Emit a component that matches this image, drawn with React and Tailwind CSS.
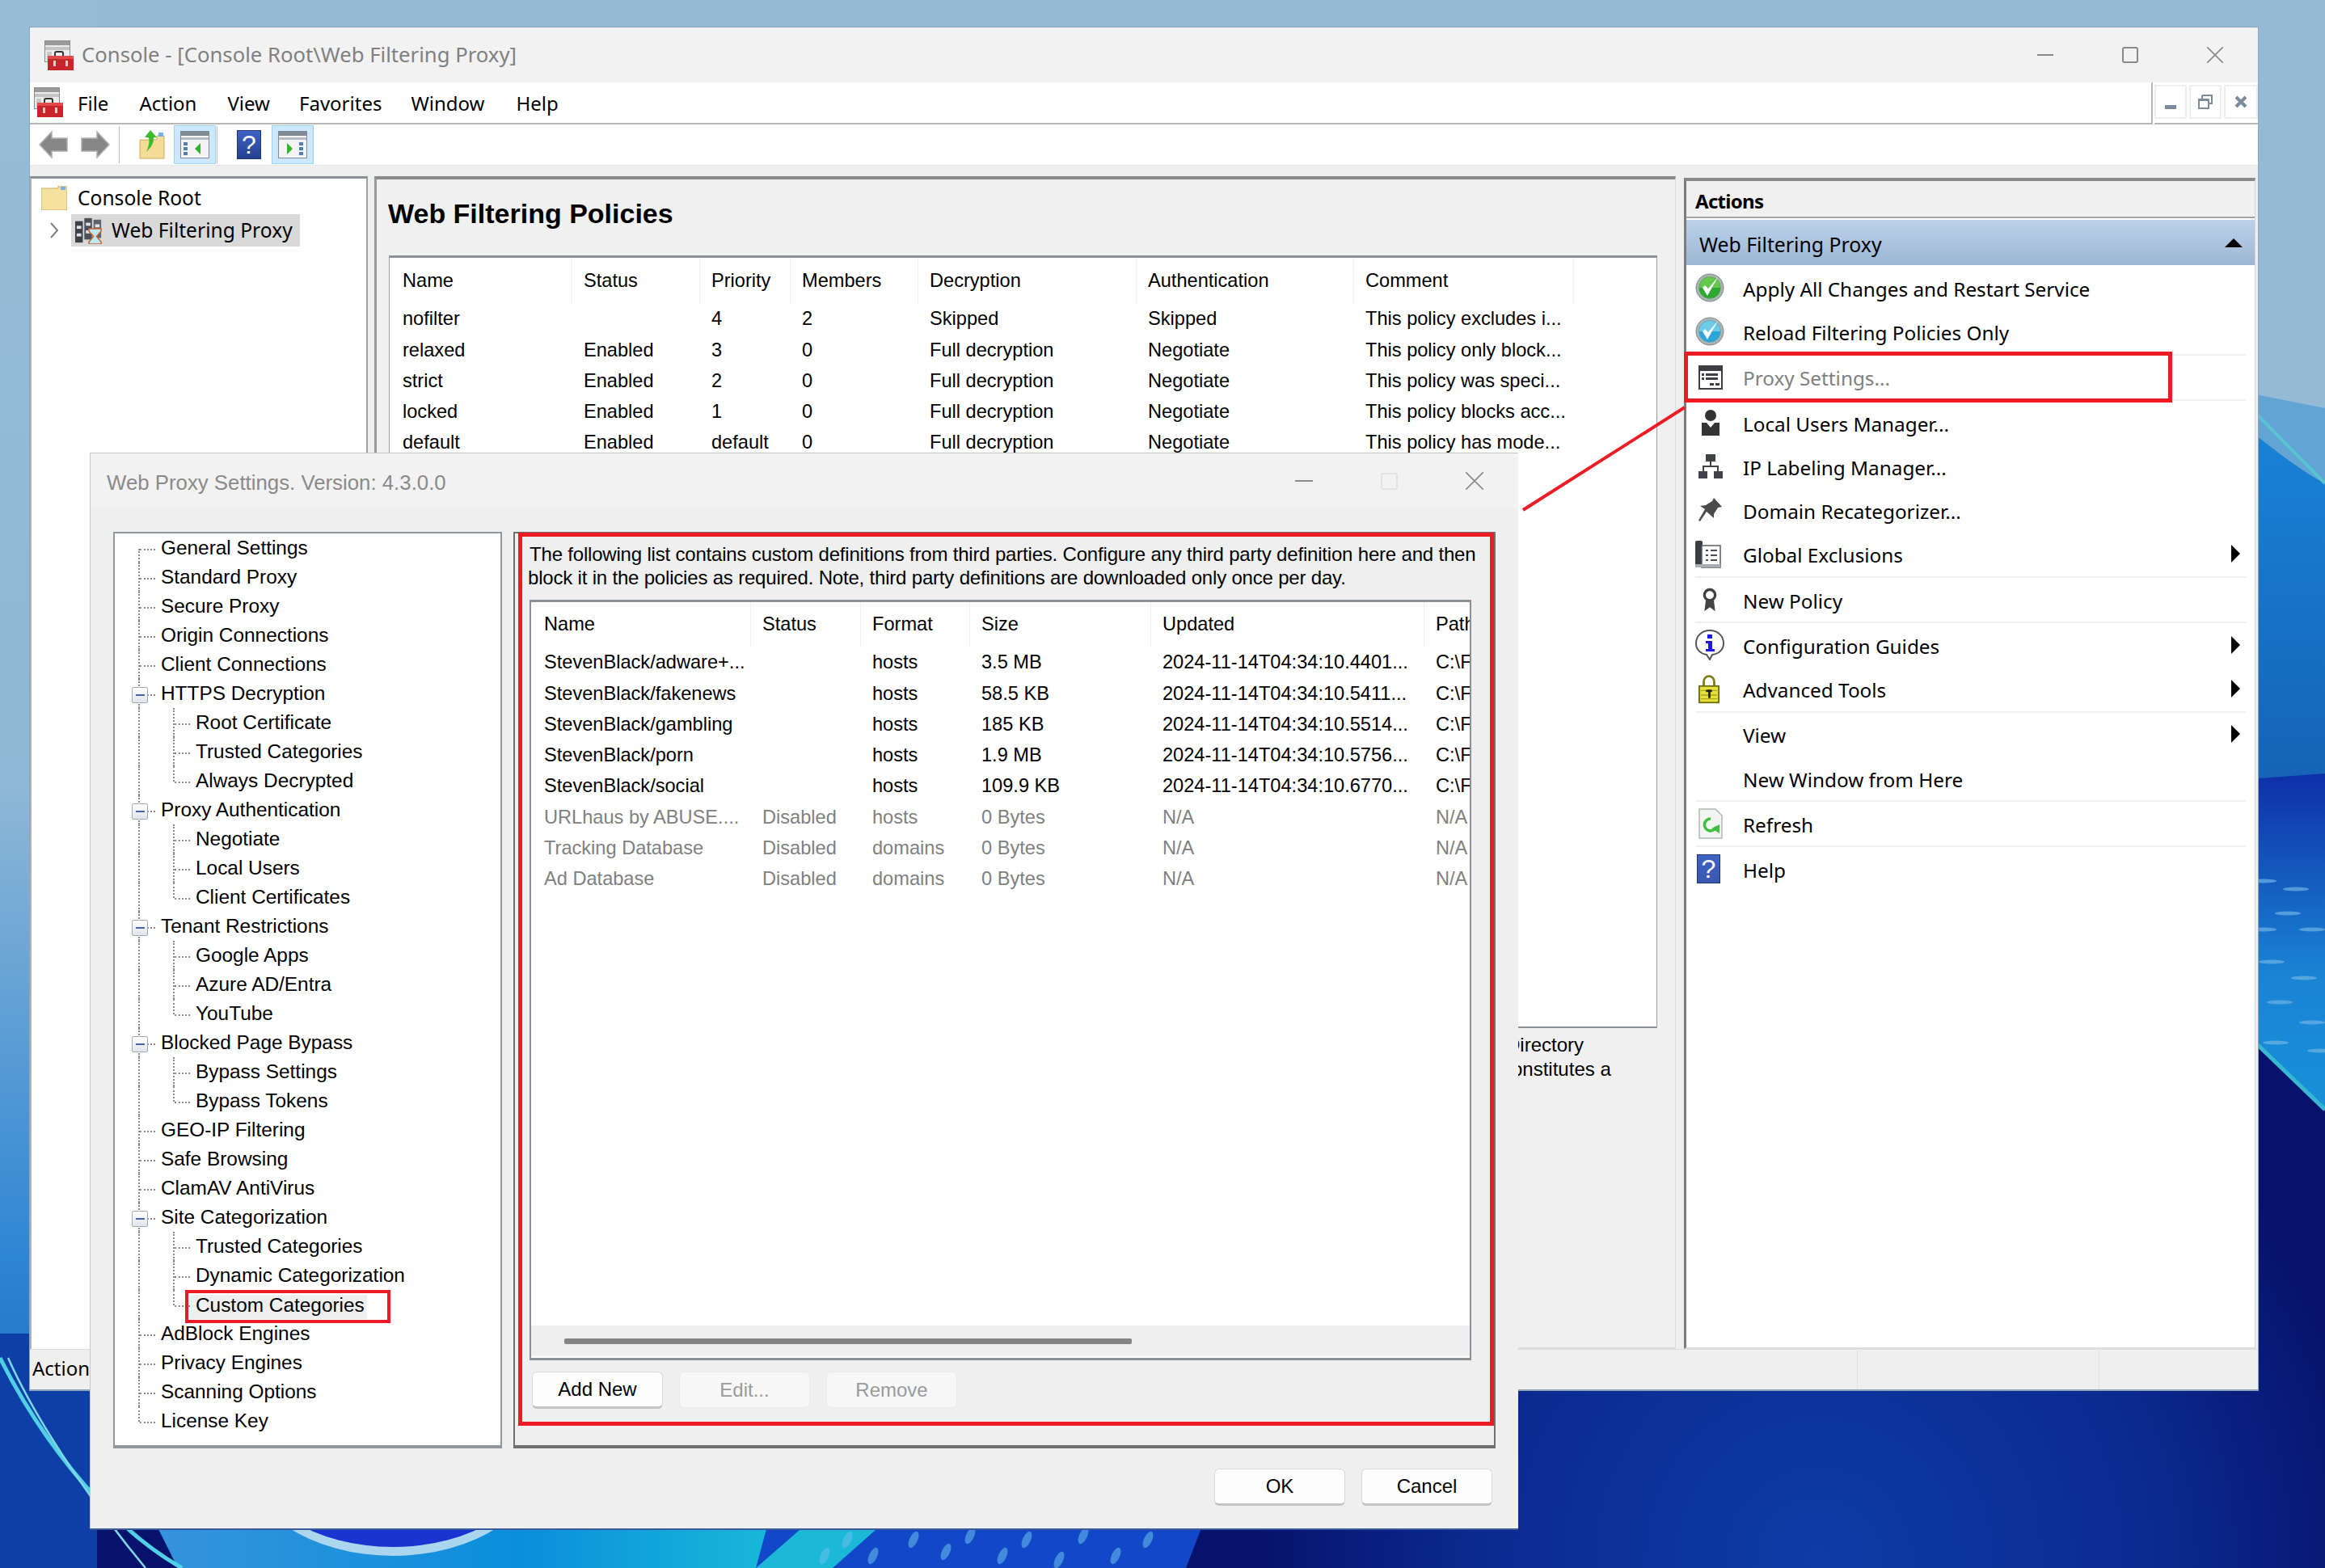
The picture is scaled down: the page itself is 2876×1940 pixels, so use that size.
import React from 'react';

const UI = "font-['Noto_Sans',sans-serif]";
const ARIAL = "font-['Liberation_Sans',Arial,sans-serif]";

const policyCols = [226, 158, 112, 158, 270, 269, 272];
const policyHead = ['Name', 'Status', 'Priority', 'Members', 'Decryption', 'Authentication', 'Comment'];
const policies = [
  ['nofilter', '', '4', '2', 'Skipped', 'Skipped', 'This policy excludes i...'],
  ['relaxed', 'Enabled', '3', '0', 'Full decryption', 'Negotiate', 'This policy only block...'],
  ['strict', 'Enabled', '2', '0', 'Full decryption', 'Negotiate', 'This policy was speci...'],
  ['locked', 'Enabled', '1', '0', 'Full decryption', 'Negotiate', 'This policy blocks acc...'],
  ['default', 'Enabled', 'default', '0', 'Full decryption', 'Negotiate', 'This policy has mode...'],
];

const listCols = [272, 136, 135, 224, 338, 58];
const listHead = ['Name', 'Status', 'Format', 'Size', 'Updated', 'Path'];
const lists = [
  ['StevenBlack/adware+...', '', 'hosts', '3.5 MB', '2024-11-14T04:34:10.4401...', 'C:\\Fi'],
  ['StevenBlack/fakenews', '', 'hosts', '58.5 KB', '2024-11-14T04:34:10.5411...', 'C:\\Fi'],
  ['StevenBlack/gambling', '', 'hosts', '185 KB', '2024-11-14T04:34:10.5514...', 'C:\\Fi'],
  ['StevenBlack/porn', '', 'hosts', '1.9 MB', '2024-11-14T04:34:10.5756...', 'C:\\Fi'],
  ['StevenBlack/social', '', 'hosts', '109.9 KB', '2024-11-14T04:34:10.6770...', 'C:\\Fi'],
  ['URLhaus by ABUSE....', 'Disabled', 'hosts', '0 Bytes', 'N/A', 'N/A'],
  ['Tracking Database', 'Disabled', 'domains', '0 Bytes', 'N/A', 'N/A'],
  ['Ad Database', 'Disabled', 'domains', '0 Bytes', 'N/A', 'N/A'],
];

const tree = [
  ['General Settings', 0, 'first'],
  ['Standard Proxy', 0],
  ['Secure Proxy', 0],
  ['Origin Connections', 0],
  ['Client Connections', 0],
  ['HTTPS Decryption', 0, 'open'],
  ['Root Certificate', 1],
  ['Trusted Categories', 1],
  ['Always Decrypted', 1, 'end'],
  ['Proxy Authentication', 0, 'open'],
  ['Negotiate', 1],
  ['Local Users', 1],
  ['Client Certificates', 1, 'end'],
  ['Tenant Restrictions', 0, 'open'],
  ['Google Apps', 1],
  ['Azure AD/Entra', 1],
  ['YouTube', 1, 'end'],
  ['Blocked Page Bypass', 0, 'open'],
  ['Bypass Settings', 1],
  ['Bypass Tokens', 1, 'end'],
  ['GEO-IP Filtering', 0],
  ['Safe Browsing', 0],
  ['ClamAV AntiVirus', 0],
  ['Site Categorization', 0, 'open'],
  ['Trusted Categories', 1],
  ['Dynamic Categorization', 1],
  ['Custom Categories', 1, 'end'],
  ['AdBlock Engines', 0],
  ['Privacy Engines', 0],
  ['Scanning Options', 0],
  ['License Key', 0, 'last'],
];

function ConsoleIcon() {
  return (
    <svg viewBox="0 0 36 37" className="w-[36px] h-[37px] shrink-0">
      <rect x="0.5" y="0.5" width="31" height="26" fill="#ececec" stroke="#8a8a8a" />
      <rect x="1" y="1" width="30" height="5" fill="#9a9a9a" />
      <rect x="1" y="8" width="30" height="4" fill="#c4c4c4" />
      <rect x="3" y="14" width="6" height="11" fill="#c9c9c9" />
      <path d="M13 20 v-4 a2 2 0 0 1 2-2 h6 a2 2 0 0 1 2 2 v4" fill="none" stroke="#333" strokeWidth="2" />
      <rect x="4" y="19" width="32" height="18" fill="#c9242c" />
      <rect x="4" y="19" width="32" height="4" fill="#e04a4a" />
      <rect x="11" y="25" width="3" height="7" fill="#f3c9c9" />
      <rect x="26" y="25" width="3" height="7" fill="#f3c9c9" />
    </svg>
  );
}

function NavArrow({ flip }) {
  return (
    <svg viewBox="0 0 36 34" className={flip ? 'w-[36px] h-[34px] shrink-0 -scale-x-100' : 'w-[36px] h-[34px] shrink-0'}>
      <path d="M1 17 L16 1 V9 H35 V25 H16 V33 Z" fill="#868686" stroke="#b0b0b0" strokeWidth="1.5" />
    </svg>
  );
}

function FolderUp() {
  return (
    <svg viewBox="0 0 32 36" className="w-[32px] h-[36px] shrink-0">
      <path d="M1 12 H22 V7 H31 V35 H1 Z" fill="#f4dc96" stroke="#c9ac5e" />
      <path d="M24 3 H30 V8 H24 Z" fill="#6fb3e8" />
      <path d="M14 0 L22 9 H18 C18 18 14 22 9 27 C12 20 13 15 12 9 H7 Z" fill="#3cbc2c" />
    </svg>
  );
}

function PanelIcon({ right }) {
  return (
    <svg viewBox="0 0 36 34" className="w-[36px] h-[34px]">
      <rect x="0.5" y="0.5" width="35" height="33" fill="#f4f4f4" stroke="#7f8a94" />
      <rect x="1" y="1" width="34" height="5" fill="#7f8a94" />
      <rect x="1" y="8" width="34" height="3" fill="#b4bcc4" />
      <rect x={right ? 26 : 4} y="14" width="5" height="4" fill="#4c7fb8" />
      <rect x={right ? 26 : 4} y="20" width="5" height="4" fill="#4c7fb8" />
      <rect x={right ? 26 : 4} y="26" width="5" height="4" fill="#4c7fb8" />
      <path d={right ? 'M11 15 L18 22 L11 29 Z' : 'M25 15 L18 22 L25 29 Z'} fill="#2fb52a" />
    </svg>
  );
}

function HelpIcon({ size }) {
  return (
    <div className={size === 'sm' ? "w-[30px] h-[36px] shrink-0 bg-gradient-to-b from-[#3f62c4] to-[#24408f] border border-[#1c3478] flex items-center justify-center text-white text-[32px] leading-none font-['Liberation_Sans',sans-serif]" : "w-[29px] h-[36px] shrink-0 bg-gradient-to-b from-[#3f62c4] to-[#3a58b0] border border-[#1c3478] flex items-center justify-center text-white text-[32px] leading-none font-['Liberation_Sans',sans-serif]"}>
      ?
    </div>
  );
}

function ProxyTreeIcon() {
  return (
    <svg viewBox="0 0 36 36" className="w-[34px] h-[34px] shrink-0">
      <rect x="0" y="6" width="10" height="28" fill="#3b3f46" />
      <rect x="12" y="2" width="10" height="28" fill="#4a4f58" />
      <rect x="24" y="4" width="10" height="24" fill="#5e646e" />
      <rect x="2" y="12" width="6" height="4" fill="#dfe3e8" />
      <rect x="2" y="22" width="6" height="4" fill="#dfe3e8" />
      <rect x="14" y="8" width="6" height="4" fill="#dfe3e8" />
      <rect x="14" y="18" width="6" height="4" fill="#dfe3e8" />
      <rect x="26" y="10" width="6" height="4" fill="#dfe3e8" />
      <path d="M18 16 H34 V19 L28 26 L34 33 V36 H18 V33 L24 26 L18 19 Z" fill="#bfe6f7" stroke="#c7662a" strokeWidth="1.6" />
    </svg>
  );
}

function CheckBadge({ from, to }) {
  return (
    <svg viewBox="0 0 36 36" className="w-[36px] h-[36px]">
      <circle cx="18" cy="18" r="17" fill="#a9b3b2" stroke="#7f8a8a" />
      <circle cx="18" cy="18" r="13.5" fill={from} />
      <path d="M5 18 A13 13 0 0 1 31 18 Z" fill={to} opacity="0.7" />
      <path d="M9 18 L15 28 L28 5 L16 19 L12 15 Z" fill="#fff" />
    </svg>
  );
}

function ActionIcon({ name }) {
  if (name === 'apply') return <CheckBadge from="#2fa82f" to="#7bd65a" />;
  if (name === 'reload') return <CheckBadge from="#2ea5d8" to="#8adcf0" />;
  if (name === 'settings') {
    return (
      <svg viewBox="0 0 30 30" className="w-[30px] h-[30px] ml-[4px]">
        <rect x="0" y="0" width="30" height="30" fill="#3d3f44" />
        <rect x="2" y="7" width="26" height="21" fill="#fff" />
        <rect x="4" y="10" width="3" height="3" fill="#3d3f44" />
        <rect x="9" y="10" width="15" height="3" fill="#3d3f44" />
        <rect x="4" y="15" width="3" height="3" fill="#3d3f44" />
        <rect x="9" y="15" width="15" height="3" fill="#3d3f44" />
        <rect x="14" y="22" width="5" height="3" fill="#3d3f44" />
        <rect x="21" y="22" width="5" height="3" fill="#3d3f44" />
      </svg>
    );
  }
  if (name === 'users') {
    return (
      <svg viewBox="0 0 26 32" className="w-[26px] h-[32px] ml-[6px]">
        <circle cx="13" cy="7" r="7" fill="#333" />
        <path d="M2 16 H8 L13 22 L18 16 H24 V32 H2 Z" fill="#333" />
      </svg>
    );
  }
  if (name === 'network') {
    return (
      <svg viewBox="0 0 30 30" className="w-[30px] h-[30px] ml-[4px]">
        <rect x="9" y="0" width="12" height="9" fill="#3f4246" />
        <rect x="14" y="9" width="2" height="7" fill="#3f4246" />
        <rect x="5" y="14" width="20" height="2" fill="#3f4246" />
        <rect x="5" y="14" width="2" height="7" fill="#3f4246" />
        <rect x="23" y="14" width="2" height="7" fill="#3f4246" />
        <rect x="0" y="21" width="11" height="9" fill="#3f4246" />
        <rect x="19" y="21" width="11" height="9" fill="#3f4246" />
      </svg>
    );
  }
  if (name === 'pin') {
    return (
      <svg viewBox="0 0 30 30" className="w-[30px] h-[30px] ml-[3px]">
        <path d="M20 0 L30 11 L25 12 L20 20 L20 25 L11 17 L3 29 L1 28 L9 14 L3 10 L10 9 L18 4 Z" fill="#4a4a4a" />
      </svg>
    );
  }
  if (name === 'exclusions') {
    return (
      <svg viewBox="0 0 32 34" className="w-[32px] h-[34px]">
        <rect x="0" y="0" width="9" height="31" rx="2" fill="#3a3d42" />
        <rect x="8" y="6" width="23" height="27" fill="#fff" stroke="#5a5e64" strokeWidth="1.5" />
        <path d="M13 12 H16 M19 12 H27 M13 18 H16 M19 18 H27 M13 24 H16 M19 24 H27" stroke="#4a4d52" strokeWidth="2" />
        <rect x="0" y="29" width="31" height="4" fill="#a8adb4" />
      </svg>
    );
  }
  if (name === 'policy') {
    return (
      <svg viewBox="0 0 24 34" className="w-[20px] h-[32px] ml-[8px]">
        <circle cx="12" cy="10" r="8" fill="#fff" stroke="#3f3f3f" strokeWidth="4" />
        <path d="M6 18 L4 34 L12 28 L20 34 L18 18 Z" fill="#444" />
      </svg>
    );
  }
  if (name === 'guides') {
    return (
      <svg viewBox="0 0 36 38" className="w-[36px] h-[38px]">
        <path d="M18 1 C8 1 1 8 1 17 C1 25 7 30 14 31 L18 37 L21 31 C29 30 35 25 35 17 C35 8 28 1 18 1 Z" fill="#fff" stroke="#555" strokeWidth="2" />
        <rect x="15" y="6" width="6" height="5" fill="#1a1ae0" />
        <path d="M13 14 H21 V24 H24 V27 H13 V24 H16 V17 H13 Z" fill="#1a1ae0" />
      </svg>
    );
  }
  if (name === 'lock') {
    return (
      <svg viewBox="0 0 28 38" className="w-[26px] h-[37px] ml-[4px]">
        <path d="M7 16 V9 a7 7 0 0 1 14 0 V16" fill="none" stroke="#7d7d10" strokeWidth="3" />
        <rect x="1" y="15" width="26" height="22" fill="#e6e23a" stroke="#6d6d10" strokeWidth="2" />
        <path d="M3 21 H25 M3 27 H25 M3 32 H25" stroke="#a8a420" strokeWidth="1.5" />
        <rect x="10" y="20" width="8" height="3" fill="#222" />
        <rect x="13" y="20" width="3" height="11" fill="#222" />
      </svg>
    );
  }
  if (name === 'refresh') {
    return (
      <svg viewBox="0 0 30 38" className="w-[30px] h-[38px] ml-[4px]">
        <path d="M1 1 H21 L29 9 V37 H1 Z" fill="#f3f5f3" stroke="#b2b6b2" strokeWidth="1.5" />
        <path d="M15 13 a7.5 7.5 0 1 0 7 10" fill="none" stroke="#3fc03f" strokeWidth="3.5" />
        <path d="M16 25 L26 20 L26 31 Z" fill="#3fc03f" />
      </svg>
    );
  }
  if (name === 'help') return <div className="ml-[2px]"><HelpIcon /></div>;
  return null;
}

const actionGroups = [
  [['Apply All Changes and Restart Service', 'apply'], ['Reload Filtering Policies Only', 'reload']],
  [['Proxy Settings...', 'settings', false, true]],
  [
    ['Local Users Manager...', 'users'],
    ['IP Labeling Manager...', 'network'],
    ['Domain Recategorizer...', 'pin'],
    ['Global Exclusions', 'exclusions', true],
  ],
  [['New Policy', 'policy']],
  [['Configuration Guides', 'guides', true], ['Advanced Tools', 'lock', true]],
  [['View', null, true], ['New Window from Here', null]],
  [['Refresh', 'refresh']],
  [['Help', 'help']],
];

function ActionsPanel() {
  return (
    <div className={`${UI} relative ml-[10px] w-[707px] shrink-0 bg-white border-t-[4px] border-l-[3px] border-t-[#8a8a8a] border-l-[#7c7c7c] border-r border-r-[#d5d5d5] border-b-2 border-b-[#dcdcdc] mt-[2px]`}>
      <div className="h-[46px] bg-[#f0f0f0] border-b-[2px] border-[#a4a4a4] flex items-center pl-[11px] pt-[6px] text-[24px] font-bold text-black tracking-[-0.7px]">
        Actions
      </div>
      <div className="mt-[2px] h-[56px] bg-gradient-to-b from-[#bcd2ea] to-[#9cb6d3] flex items-center pl-[16px] pr-[15px] pt-[5px] justify-between text-[24.8px] text-black">
        <span>Web Filtering Proxy</span>
        <span className="w-0 h-0 border-l-[11px] border-r-[11px] border-b-[11px] border-l-transparent border-r-transparent border-b-black -mt-[4px]" />
      </div>
      <div className="pt-[3px]">
        {actionGroups.map((group, gi) => (
          <div key={gi}>
            {group.map(([label, icon, sub, dim]) => (
              <div key={label} className="h-[54.25px] flex items-center pl-[11px] pr-[18px]">
                <div className="w-[38px] h-[38px] -mt-[4px] shrink-0 flex items-center">
                  {icon && <ActionIcon name={icon} />}
                </div>
                <span className={dim ? 'ml-[21px] text-[24.3px] text-[#808080]' : 'ml-[21px] text-[24.3px] text-black'}>
                  {label}
                </span>
                {sub && <span className="ml-auto -mt-[5px] w-0 h-0 border-t-[11px] border-b-[11px] border-l-[11px] border-t-transparent border-b-transparent border-l-black" />}
              </div>
            ))}
            {gi < actionGroups.length - 1 && <div className="h-[2px] -mt-[2px] mb-[2px] mx-[11px] bg-[#f0f0f0]" />}
          </div>
        ))}
      </div>
      <div className="absolute left-[-3px] top-[211px] w-[604px] h-[63px] border-[5px] border-[#ed1c24]" />
    </div>
  );
}

function PolicyTable() {
  return (
    <div className={`${ARIAL} w-[1569px] h-[956px] bg-white border-t-[3px] border-t-[#8b9096] border-x border-x-[#9aa0a6] border-b-2 border-b-[#8b9096] text-[23.6px] text-black`}>
      <div className="flex h-[57px]">
        {policyHead.map((h, i) => (
          <div key={h} style={{ width: policyCols[i] }} className={i === 0 ? 'pl-[16px] flex items-center border-r border-[#f0f0f0] shrink-0' : 'pl-[14px] flex items-center border-r border-[#f0f0f0] shrink-0'}>
            {h}
          </div>
        ))}
      </div>
      {policies.map((row) => (
        <div key={row[0]} className="flex h-[38.25px] items-center">
          {row.map((cell, i) => (
            <div key={i} style={{ width: policyCols[i] }} className={i === 0 ? 'pl-[16px] shrink-0 whitespace-nowrap' : 'pl-[14px] shrink-0 whitespace-nowrap'}>
              {cell}
            </div>
          ))}
        </div>
      ))}
    </div>
  );
}

function MainWindow() {
  return (
    <div className="absolute left-[36px] top-[33px] w-[2758px] h-[1688px] flex flex-col bg-[#efefef] border border-[#8ba5bd] border-b-[2px]">
      <div className={`${UI} h-[68px] shrink-0 bg-[#f2f2f2] flex items-center pl-[18px] text-[25.7px] text-[#808080]`}>
        <ConsoleIcon />
        <span className="ml-[10px]">Console - [Console Root\Web Filtering Proxy]</span>
        <div className="ml-auto flex items-center">
          <span className="w-[20px] h-[2px] bg-[#888]" />
          <span className="ml-[85px] w-[20px] h-[20px] border-2 border-[#888] rounded-[3px]" />
          <svg viewBox="0 0 20 20" className="ml-[85px] mr-[43px] w-[20px] h-[20px]">
            <path d="M0 0 L20 20 M20 0 L0 20" stroke="#888" strokeWidth="1.6" />
          </svg>
        </div>
      </div>

      <div className={`${UI} h-[52px] shrink-0 bg-white flex items-stretch text-[24px] text-black`}>
        <div className="flex-1 flex items-center border-b-[2px] border-[#b8b8b8] relative">
          <div className="ml-[5px] -mt-[2px]"><ConsoleIcon /></div>
          <span className="ml-[18px] mt-[2px]">File</span>
          <span className="ml-[38px] mt-[2px]">Action</span>
          <span className="ml-[38px] mt-[2px]">View</span>
          <span className="ml-[36px] mt-[2px]">Favorites</span>
          <span className="ml-[36px] mt-[2px]">Window</span>
          <span className="ml-[39px] mt-[2px]">Help</span>
        </div>
        <div className="w-[2px] bg-[#b8b8b8]" />
        <div className="w-[2px]" />
        <div className="w-[128px] flex gap-[3px] pt-[3px] border-b-[2px] border-[#b8b8b8] pb-[5px]">
          <div className="w-[40px] border-2 border-[#eeeeee] flex items-end justify-center pb-[10px]"><span className="w-[14px] h-[5px] bg-[#7b8a9c]" /></div>
          <div className="w-[40px] border-2 border-[#eeeeee] flex items-center justify-center">
            <svg viewBox="0 0 18 18" className="w-[18px] h-[18px]">
              <path d="M5 1 H17 V11 H13 M5 1 V5" fill="none" stroke="#7b8a9c" strokeWidth="2" />
              <rect x="1" y="6" width="12" height="11" fill="none" stroke="#7b8a9c" strokeWidth="2" />
              <rect x="1" y="5" width="12" height="3" fill="#7b8a9c" />
            </svg>
          </div>
          <div className="w-[42px] border-2 border-[#eeeeee] flex items-center justify-center">
            <svg viewBox="0 0 16 16" className="w-[16px] h-[16px]">
              <path d="M2 2 L14 14 M14 2 L2 14" stroke="#7b8a9c" strokeWidth="4" />
            </svg>
          </div>
        </div>
      </div>

      <div className="h-[50px] shrink-0 bg-white flex items-center">
        <div className="ml-[11px]"><NavArrow /></div>
        <div className="ml-[16px]"><NavArrow flip /></div>
        <div className="ml-[11px] w-px h-[46px] bg-[#bdbdbd]" />
        <div className="ml-[24px]"><FolderUp /></div>
        <div className="ml-[11px] w-[52px] h-[48px] bg-[#cce8ff] border border-[#99d1ff] flex items-center justify-center"><PanelIcon /></div>
        <div className="ml-px w-px h-[46px] bg-[#bdbdbd]" />
        <div className="ml-[24px]"><HelpIcon size="sm" /></div>
        <div className="ml-[13px] w-[52px] h-[48px] bg-[#cce8ff] border border-[#99d1ff] flex items-center justify-center"><PanelIcon right /></div>
      </div>

      <div className="flex-1 min-h-0 pt-[13px] bg-[#efefef] border-t border-[#e6e6e6] flex">
        <div className={`${UI} w-[418px] shrink-0 bg-white border-t-[3px] border-x-2 border-t-[#8a9096] border-l-[#b0b0b0] border-r-[#a0a4a8] pt-[4px] text-[24.6px] text-black`}>
          <div className="h-[40px] flex items-center pl-[12px]">
            <svg viewBox="0 0 32 30" className="w-[32px] h-[30px] shrink-0">
              <path d="M0 3 H21 V0 H32 V30 H0 Z" fill="#f6e29f" stroke="#c9ac5e" />
              <rect x="24" y="1" width="6" height="4" fill="#6fb3e8" />
            </svg>
            <span className="ml-[13px]">Console Root</span>
          </div>
          <div className="h-[40px] flex items-center pl-[22px]">
            <svg viewBox="0 0 12 20" className="w-[12px] h-[20px] shrink-0">
              <path d="M2 1 L10 10 L2 19" fill="none" stroke="#808080" strokeWidth="2" />
            </svg>
            <div className="ml-[15px] w-[283px] h-[40px] bg-[#d9d9d9] flex items-center pl-[5px]">
              <ProxyTreeIcon />
              <span className="ml-[11px] whitespace-nowrap">Web Filtering Proxy</span>
            </div>
          </div>
        </div>
        <div className="ml-[8px] w-[1610px] shrink-0 bg-[#f0f0f0] border-t-[4px] border-l-[3px] border-t-[#8a8a8a] border-l-[#9a9a9a] border-r border-r-[#dcdcdc] border-b-2 border-b-[#dcdcdc]">
          <h1 className={`${ARIAL} ml-[14px] mt-[24px] mb-[34px] h-[36px] flex items-center text-[34px] font-bold text-black`}>Web Filtering Policies</h1>
          <div className="ml-[15px]"><PolicyTable /></div>
          <div className={`${ARIAL} pl-[1392px] mt-[6px] text-[24px] leading-[30px] text-black whitespace-nowrap`}>
            <div className="ml-[5px]">Directory</div>
            <div>constitutes a</div>
          </div>
        </div>
        <ActionsPanel />
      </div>

      <div className={`${UI} h-[50px] shrink-0 bg-[#efefef] border-t border-[#dedede] flex text-[24px] text-black`}>
        <div className="w-[2261px] pl-[3px] flex items-center border-r border-[#e2e2e2] -mt-[3px]">Action</div>
        <div className="w-[299px] border-r border-[#e2e2e2]" />
      </div>
    </div>
  );
}

function TreeRow({ label, level, mark }) {
  const isFirst = mark === 'first';
  const isLast = mark === 'last';
  const isEnd = mark === 'end';
  const isSelected = label === 'Custom Categories';
  return (
    <div className="relative h-[36px] flex items-center">
      <span
        className={
          isFirst
            ? 'absolute left-[29px] top-[19px] bottom-0 border-l-2 border-dotted border-[#8a8a8a]'
            : isLast
              ? 'absolute left-[29px] top-0 h-[19px] border-l-2 border-dotted border-[#8a8a8a]'
              : 'absolute left-[29px] top-0 bottom-0 border-l-2 border-dotted border-[#8a8a8a]'
        }
      />
      {level === 1 && (
        <span
          className={
            isEnd
              ? 'absolute left-[72px] top-0 h-[19px] border-l-2 border-dotted border-[#8a8a8a]'
              : 'absolute left-[72px] top-0 bottom-0 border-l-2 border-dotted border-[#8a8a8a]'
          }
        />
      )}
      <span
        className={
          level === 1
            ? 'absolute left-[74px] top-[19px] w-[19px] border-t-2 border-dotted border-[#8a8a8a]'
            : 'absolute left-[31px] top-[19px] w-[19px] border-t-2 border-dotted border-[#8a8a8a]'
        }
      />
      {mark === 'open' && (
        <span className="absolute left-[21px] top-[10px] w-[20px] h-[20px] rounded-[2px] bg-gradient-to-b from-white to-[#dfe3ea] border border-[#a4a8b0] flex items-center justify-center">
          <span className="w-[11px] h-[2px] bg-[#4a64ac]" />
        </span>
      )}
      {isSelected ? (
        <span className="absolute left-[87px] top-0 w-[254px] h-[41px] border-[4px] border-[#ed1c24] flex items-center">
          <span className="ml-[2px] w-[219px] h-[30px] bg-[#efefef] flex items-center pl-[7px] pb-[2px] text-black">{label}</span>
        </span>
      ) : (
        <span className={level === 1 ? 'ml-[100px] relative' : 'ml-[57px] relative'}>{label}</span>
      )}
    </div>
  );
}

function Btn({ children, off }) {
  return (
    <div
      className={
        off
          ? 'w-[162px] h-[45px] rounded-[6px] bg-[#f7f7f7] border border-[#ebebeb] flex items-center justify-center text-[#9a9a9a]'
          : 'w-[162px] h-[46px] rounded-[6px] bg-[#fdfdfd] border border-[#d8d8d8] border-b-[3px] border-b-[#c4c4c4] flex items-center justify-center text-black'
      }
    >
      {children}
    </div>
  );
}

function ListBox() {
  return (
    <div className="mt-[13px] w-[1165px] h-[941px] flex flex-col bg-white border-t-[3px] border-t-[#8b9096] border-x-2 border-x-[#8b9096] border-b-[3px] border-b-[#8b9096] text-[23.6px] overflow-hidden">
      <div className="flex h-[56px] shrink-0">
        {listHead.map((h, i) => (
          <div key={h} style={{ width: listCols[i] }} className={i === 0 ? 'pl-[16px] flex items-center border-r border-[#f0f0f0] shrink-0 overflow-hidden' : 'pl-[14px] flex items-center border-r border-[#f0f0f0] shrink-0 overflow-hidden'}>
            {h}
          </div>
        ))}
      </div>
      {lists.map((row) => (
        <div key={row[0]} className={row[1] ? 'flex h-[38.25px] items-center shrink-0 text-[#808080]' : 'flex h-[38.25px] items-center shrink-0 text-black'}>
          {row.map((cell, i) => (
            <div key={i} style={{ width: listCols[i] }} className={i === 0 ? 'pl-[16px] shrink-0 whitespace-nowrap overflow-hidden' : 'pl-[14px] shrink-0 whitespace-nowrap overflow-hidden'}>
              {cell}
            </div>
          ))}
        </div>
      ))}
      <div className="mt-auto h-[38px] shrink-0 mb-[2px] bg-[#efefef] flex items-center pl-[41px]">
        <div className="w-[702px] h-[7px] rounded-[2px] bg-[#858585]" />
      </div>
    </div>
  );
}

function Dialog() {
  return (
    <div className={`${ARIAL} absolute left-[111px] top-[560px] w-[1767px] h-[1331px] flex flex-col bg-[#efefef] border-l border-t border-[#c4c8cc] shadow-[0_2px_0_#3a5a9a] text-[24.4px] text-black`}>
      <div className="h-[68px] shrink-0 bg-[#f2f2f2] flex items-center pl-[20px] text-[25.8px] text-[#8a8a8a]">
        <span className="mt-[4px]">Web Proxy Settings. Version: 4.3.0.0</span>
        <div className="ml-auto flex items-center">
          <span className="w-[22px] h-[2px] bg-[#888]" />
          <span className="ml-[84px] w-[21px] h-[21px] border-2 border-[#e2e2e2] rounded-[3px]" />
          <svg viewBox="0 0 22 22" className="ml-[84px] mr-[43px] w-[22px] h-[22px]">
            <path d="M0 0 L22 22 M22 0 L0 22" stroke="#888" strokeWidth="1.6" />
          </svg>
        </div>
      </div>
      <div className="pl-[28px] pt-[29px] flex gap-[14px]">
        <div className="w-[481px] h-[1134px] shrink-0 bg-white border-2 border-[#8e969e] border-b-[4px]">
          {tree.map(([label, level, mark], i) => (
            <TreeRow key={i} label={label} level={level} mark={mark} />
          ))}
        </div>
        <div className="relative w-[1215px] h-[1134px] shrink-0 border-2 border-[#6f6f6f] border-b-[4px] pl-[18px] pt-[11px]">
          <p className="text-[24px] leading-[29px] whitespace-nowrap tracking-[-0.19px]">
            The following list contains custom definitions from third parties. Configure any third party definition here and then
            <span className="block -ml-[2px]">block it in the policies as required. Note, third party definitions are downloaded only once per day.</span>
          </p>
          <ListBox />
          <div className="mt-[14px] ml-[3px] flex gap-[20px] text-[24px]">
            <Btn>Add New</Btn>
            <Btn off>Edit...</Btn>
            <Btn off>Remove</Btn>
          </div>
          <div className="absolute left-[4px] -top-[1px] w-[1207px] h-[1105px] border-[5px] border-[#ed1c24]" />
        </div>
      </div>
      <div className="mt-[25px] pr-[32px] flex justify-end gap-[20px] text-[24px]">
        <Btn>OK</Btn>
        <Btn>Cancel</Btn>
      </div>
    </div>
  );
}

const dashes = [
  [1020, 1925], [1048, 1905], [1080, 1925], [1130, 1905], [1170, 1920], [1200, 1900],
  [1240, 1925], [1270, 1905], [1310, 1930], [1340, 1900], [1380, 1925], [1420, 1905],
];

const ripples = [
  [2800, 1090], [2830, 1130], [2860, 1150], [2810, 1190], [2850, 1210], [2820, 1240],
  [2800, 1150], [2860, 1265], [2840, 1100], [2870, 1300], [2815, 1290],
];

function Wallpaper() {
  return (
    <svg viewBox="0 0 2876 1940" className="absolute inset-0 w-[2876px] h-[1940px]">
      <defs>
        <radialGradient id="navy" gradientUnits="userSpaceOnUse" cx="2250" cy="1930" r="700">
          <stop offset="0" stopColor="#0d3ca6" />
          <stop offset="0.6" stopColor="#0b2a90" />
          <stop offset="1" stopColor="#07126c" />
        </radialGradient>
        <linearGradient id="strip" x1="0" y1="0" x2="0" y2="1">
          <stop offset="0" stopColor="#1a86da" />
          <stop offset="1" stopColor="#1563b6" />
        </linearGradient>
        <linearGradient id="ripple" x1="0" y1="0" x2="0" y2="1">
          <stop offset="0" stopColor="#0e2fa8" />
          <stop offset="0.6" stopColor="#1a84d4" />
          <stop offset="1" stopColor="#1890d8" />
        </linearGradient>
        <linearGradient id="leftSide" x1="0" y1="0" x2="0" y2="1">
          <stop offset="0" stopColor="#97bcd6" />
          <stop offset="0.5" stopColor="#8fb8d6" />
          <stop offset="0.8" stopColor="#2f86d4" />
          <stop offset="1" stopColor="#1158b6" />
        </linearGradient>
        <linearGradient id="sweep" x1="0" y1="0" x2="1" y2="0">
          <stop offset="0" stopColor="#3f94dc" />
          <stop offset="0.6" stopColor="#0a8fdc" />
          <stop offset="1" stopColor="#1bbfd8" />
        </linearGradient>
      </defs>
      <rect width="2876" height="1940" fill="url(#navy)" />
      <rect x="0" y="0" width="2876" height="520" fill="#95bad5" />
      <rect x="0" y="0" width="120" height="1940" fill="url(#leftSide)" />
      <path d="M2700 470 L2876 505 V620 L2700 500 Z" fill="#62a5d4" />
      <path d="M2700 480 C2760 505 2820 570 2876 598 V960 L2700 970 Z" fill="url(#strip)" />
      <path d="M2700 482 L2793 514 L2876 598" fill="none" stroke="#57c4d0" strokeWidth="4" />
      <path d="M2700 970 L2876 957 V1373 L2793 1293 L2700 1270 Z" fill="url(#ripple)" />
      <path d="M2793 1293 L2876 1373" fill="none" stroke="#38b8d0" strokeWidth="5" />
      {ripples.map(([x, y], i) => (
        <ellipse key={i} cx={x} cy={y} rx="16" ry="2.5" fill="#6fb4e4" opacity="0.7" />
      ))}
      <path d="M0 1650 H120 V1940 H0 Z" fill="#0e3fa6" />
      <path d="M100 1700 L1000 1700 L1010 1940 L220 1940 Z" fill="url(#sweep)" />
      <path d="M1000 1700 H1560 L1467 1940 H935 Z" fill="#1248c8" />
      <path d="M1027 1860 L1120 1860 L1030 1940 H935 Z" fill="#1bb8d8" />
      {dashes.map(([x, y], i) => (
        <ellipse key={i} cx={x} cy={y} rx="5" ry="11" fill="#6cc0ec" opacity="0.55" transform={`rotate(25 ${x} ${y})`} />
      ))}
      <ellipse cx="486" cy="1800" rx="186" ry="125" fill="#cfe6f2" opacity="0.8" />
      <ellipse cx="486" cy="1800" rx="178" ry="114" fill="#1a34d2" />
      <path d="M0 1680 C40 1760 120 1880 225 1940" fill="none" stroke="#4fd0e4" strokeWidth="5" />
      <path d="M10 1680 C50 1770 130 1880 180 1940" fill="none" stroke="#7fd8e8" strokeWidth="2.5" />
    </svg>
  );
}

export default function App() {
  return (
    <div className="relative w-[2876px] h-[1940px] overflow-hidden bg-[#0b2a90]">
      <Wallpaper />
      <MainWindow />
      <Dialog />
      <svg viewBox="0 0 2876 1940" className="absolute inset-0 w-[2876px] h-[1940px] pointer-events-none">
        <line x1="1884" y1="631" x2="2084" y2="504" stroke="#ed1c24" strokeWidth="4" />
      </svg>
    </div>
  );
}
